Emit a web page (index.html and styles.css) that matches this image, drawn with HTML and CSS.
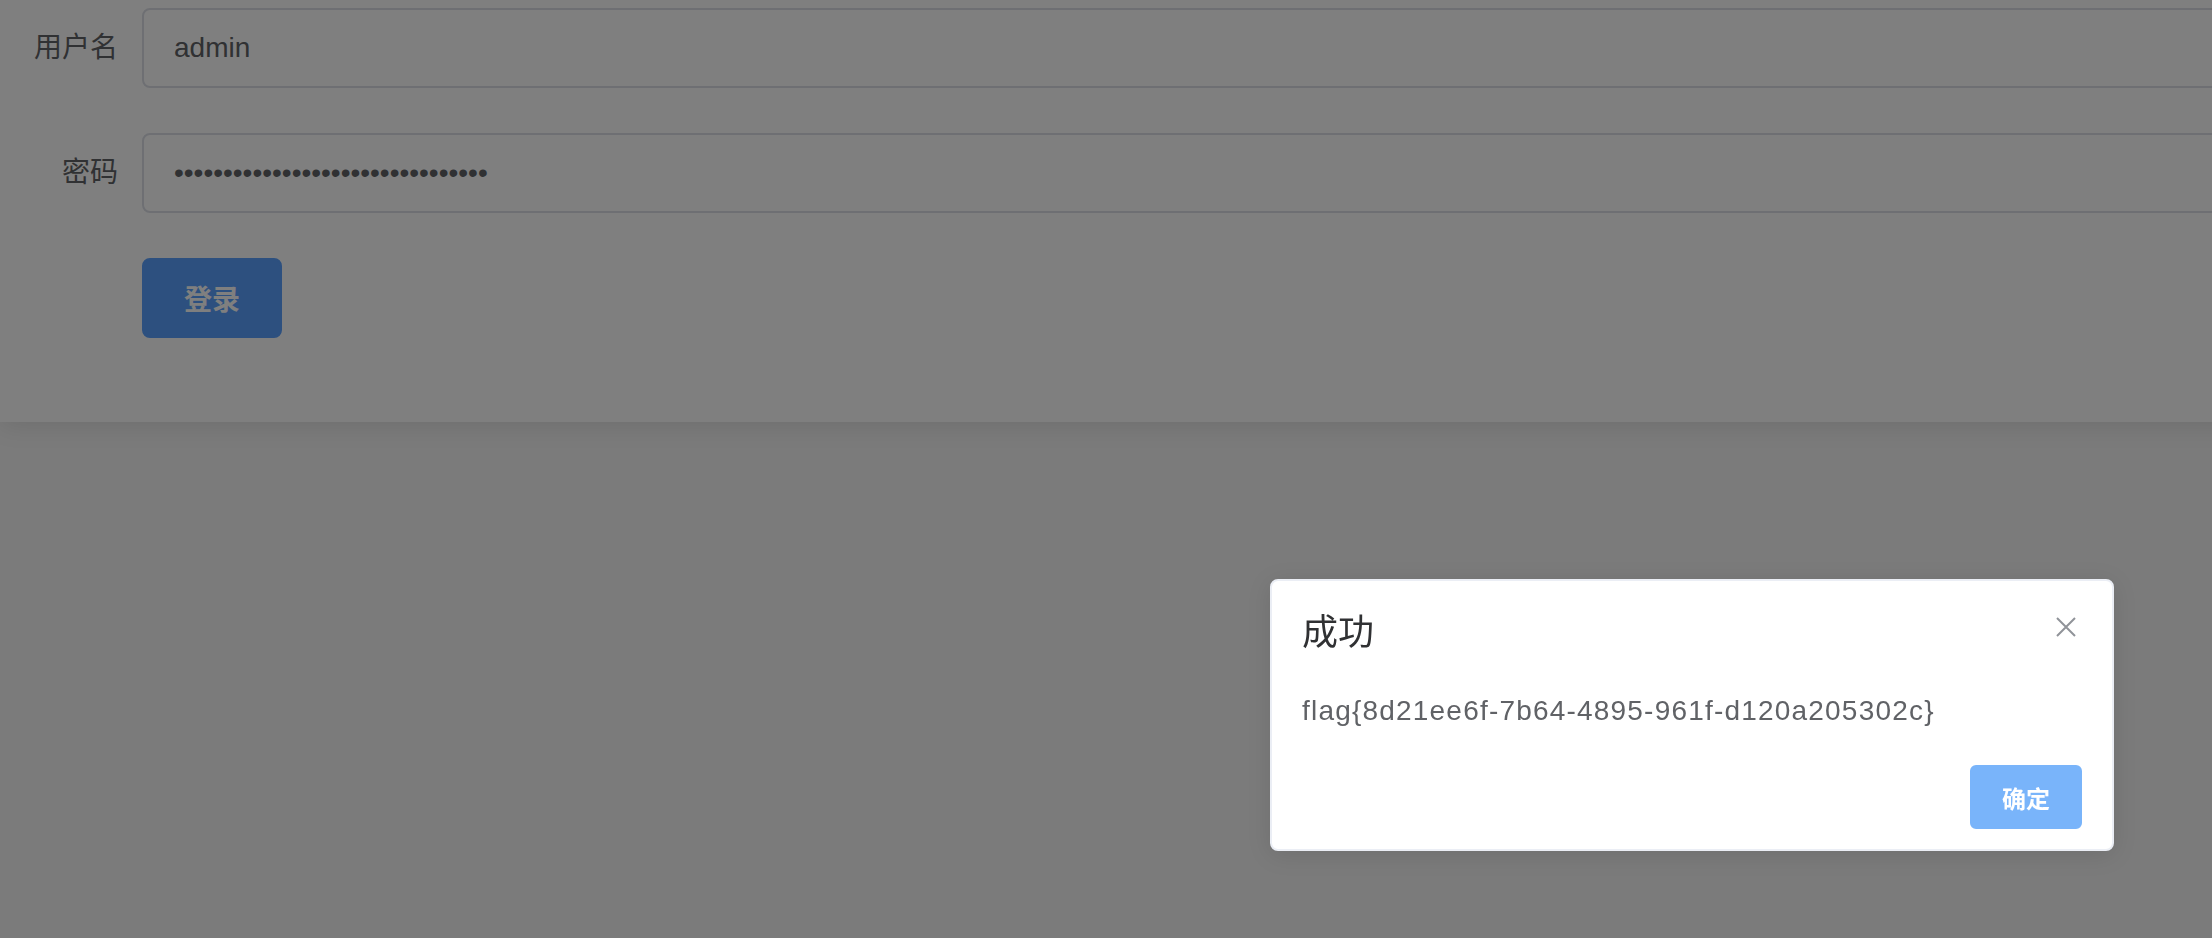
FILE: index.html
```html
<!DOCTYPE html>
<html lang="zh-CN">

<head>
    <meta charset="UTF-8" />
    <meta name="viewport" content="width=device-width, initial-scale=1.0" />
    <title>登录</title>
    <link rel="stylesheet" href="styles.css">
</head>

<body>
    <div class="card">
        <form class="login-form">
            <div class="form-item">
                <label class="form-label" for="username">用户名</label>
                <input class="form-input" id="username" type="text" value="admin">
            </div>
            <div class="form-item">
                <label class="form-label" for="password">密码</label>
                <input class="form-input" id="password" type="password" value="aaaaaaaaaaaaaaaaaaaaaaaaaaaaaaaa">
            </div>
            <div class="form-item form-actions">
                <button class="btn btn-login" type="button">登录</button>
            </div>
        </form>
    </div>

    <div class="modal-mask"></div>

    <div class="message-box">
        <div class="message-header">
            <span class="message-title">成功</span>
            <button class="message-close" type="button" aria-label="关闭">
                <svg width="20" height="20" viewBox="0 0 20 20">
                    <path d="M1 1 L19 19 M19 1 L1 19" stroke="#909399" stroke-width="2" fill="none" />
                </svg>
            </button>
        </div>
        <div class="message-content">flag{8d21ee6f-7b64-4895-961f-d120a205302c}</div>
        <div class="message-btns">
            <button class="btn btn-confirm" type="button">确定</button>
        </div>
    </div>
</body>

</html>
```

FILE: styles.css
```css
body {
    margin: 0;
    overflow: hidden;
    height: 100vh;
    background: #f6f6f6;
    font-family: "Liberation Sans", "Noto Sans CJK SC", sans-serif;
}

.card {
    width: 2400px;
    background: #fff;
    padding: 8px 0 40px;
    box-shadow: 0 4px 24px rgba(0, 0, 0, 0.1);
}

.form-item {
    display: flex;
    margin-bottom: 45px;
}

.form-item:last-child {
    margin-bottom: 44px;
}

.form-label {
    width: 142px;
    box-sizing: border-box;
    padding-right: 24px;
    text-align: right;
    line-height: 80px;
    font-size: 28px;
    color: #606266;
}

.form-input {
    flex: 1;
    height: 80px;
    box-sizing: border-box;
    border: 2px solid #dcdfe6;
    border-radius: 8px;
    padding: 0 30px;
    font-family: "Liberation Sans", "Noto Sans CJK SC", sans-serif;
    font-size: 28px;
    color: #606266;
    outline: none;
}

.form-actions {
    padding-left: 142px;
}

.btn {
    font-family: "Liberation Sans", "Noto Sans CJK SC", sans-serif;
    color: #fff;
    cursor: pointer;
}

.btn-login {
    height: 80px;
    padding: 0 40px;
    border: 2px solid #5aa0ff;
    border-radius: 8px;
    background: #5aa0ff;
    font-size: 28px;
    font-weight: bold;
}

/* dark layer behind the message box */
.modal-mask {
    position: fixed;
    top: 0;
    left: 0;
    right: 0;
    bottom: 0;
    background: rgba(0, 0, 0, 0.5);
}

.message-box {
    position: absolute;
    left: 1270px;
    top: 579px;
    width: 844px;
    box-sizing: border-box;
    padding-bottom: 20px;
    background: #fff;
    border: 2px solid #ebeef5;
    border-radius: 8px;
    box-shadow: 0 4px 24px rgba(0, 0, 0, 0.1);
}

.message-header {
    position: relative;
    padding: 30px 30px 20px;
}

.message-title {
    display: block;
    font-family: "Noto Sans CJK SC", sans-serif;
    font-size: 36px;
    line-height: 36px;
    color: #303133;
}

.message-close {
    position: absolute;
    top: 30px;
    right: 30px;
    width: 32px;
    height: 32px;
    padding: 0;
    border: none;
    background: transparent;
    display: flex;
    align-items: center;
    justify-content: center;
}

.message-content {
    padding: 20px 30px;
    font-size: 28px;
    line-height: 48px;
    letter-spacing: 1.2px;
    color: #606266;
}

.message-btns {
    padding: 10px 30px 0;
    text-align: right;
}

.btn-confirm {
    height: 64px;
    padding: 0 30px;
    border: 2px solid #79b4fa;
    border-radius: 6px;
    background: #79b4fa;
    font-size: 24px;
    font-weight: bold;
}
```
